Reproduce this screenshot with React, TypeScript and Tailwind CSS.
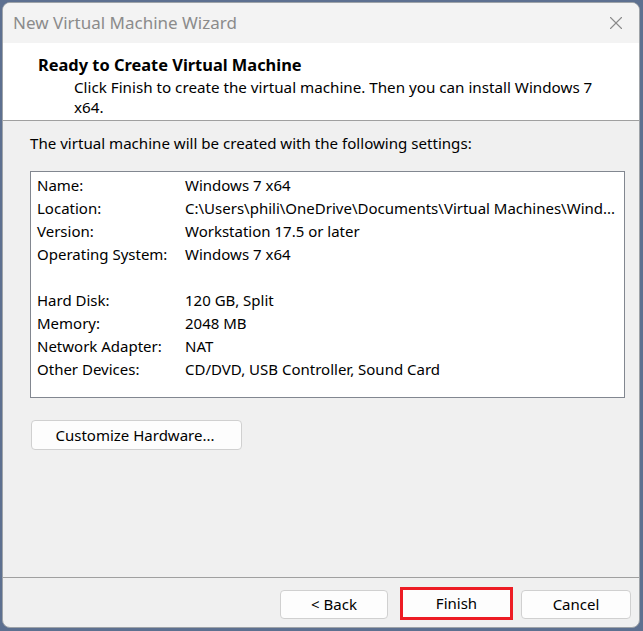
import { X } from 'lucide-react';

const rows: [string, string][] = [
  ['Name:', 'Windows 7 x64'],
  ['Location:', 'C:\\Users\\phili\\OneDrive\\Documents\\Virtual Machines\\Wind...'],
  ['Version:', 'Workstation 17.5 or later'],
  ['Operating System:', 'Windows 7 x64'],
  ['', ''],
  ['Hard Disk:', '120 GB, Split'],
  ['Memory:', '2048 MB'],
  ['Network Adapter:', 'NAT'],
  ['Other Devices:', 'CD/DVD, USB Controller, Sound Card'],
];

export default function App() {
  return (
    <div className="w-[643px] h-[631px] bg-[#5d7090] pt-[2px] pl-[2px] overflow-hidden" style={{ fontFamily: '"Noto Sans", sans-serif' }}>
      <div className="w-[638px] h-[626px] rounded-lg border border-[#9ea3a8] bg-[#f0f0f0] flex flex-col overflow-hidden text-[15px] text-black">
        {/* title bar */}
        <div className="h-[40px] bg-[#f3f3f3] flex items-center justify-between pl-[10px] pr-[12px] shrink-0">
          <span className="text-[17px] text-[#8b8b8b]">New Virtual Machine Wizard</span>
          <X size={22} strokeWidth={1.2} className="text-[#8b8b8b]" />
        </div>

        {/* header */}
        <div className="h-[78px] bg-white border-b border-[#a0a0a0] shrink-0 pt-[11px]">
          <div className="pl-[35px] font-bold text-[16.4px] leading-[22px]">Ready to Create Virtual Machine</div>
          <div className="pl-[71px] pr-[30px] leading-[20px] mt-[1px] text-[15.2px]">
            Click Finish to create the virtual machine. Then you can install Windows 7 x64.
          </div>
        </div>

        {/* body */}
        <div className="flex-1 flex flex-col px-[27px] pt-[12px]">
          <div className="leading-[20px] text-[15.1px]">The virtual machine will be created with the following settings:</div>
          <div className="mt-[18px] w-[595px] h-[227px] bg-white border border-[#828790] pl-[6px] pt-[2px]">
            {rows.map(([k, v], i) => (
              <div key={i} className="flex h-[23px] items-center whitespace-nowrap">
                <span className="w-[148px] shrink-0">{k}</span>
                <span>{v}</span>
              </div>
            ))}
          </div>
          <button className="mt-[22px] w-[211px] h-[30px] bg-[#fdfdfd] border border-[#d0d0d0] rounded-[4px] ml-[1px] text-[15px] pr-[3px]">
            Customize Hardware...
          </button>
        </div>

        {/* footer */}
        <div className="h-[50px] border-t border-[#a0a0a0] shrink-0 flex items-start justify-end pr-[8px] pt-[9px]">
          <button className="mt-[3px] w-[108px] h-[29px] bg-[#fdfdfd] border border-[#d0d0d0] rounded-[4px]">&lt; Back</button>
          <button className="ml-[12px] w-[113px] h-[33px] bg-[#fdfdfd] border-[3px] border-[#ed1c24]">Finish</button>
          <button className="mt-[3px] ml-[8px] w-[110px] h-[29px] bg-[#fdfdfd] border border-[#d0d0d0] rounded-[4px]">Cancel</button>
        </div>
      </div>
    </div>
  );
}
